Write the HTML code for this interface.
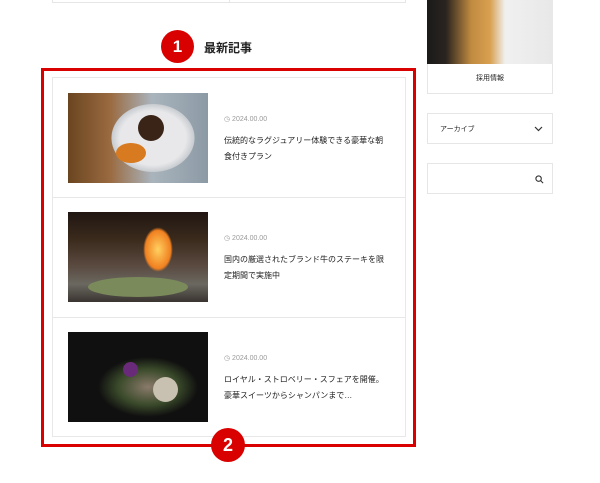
<!DOCTYPE html>
<html><head><meta charset="utf-8"><style>
body{margin:0;width:600px;height:483px;background:#fff;position:relative;overflow:hidden;font-family:"Liberation Sans","Noto Sans CJK JP",sans-serif;color:#222}
.a{position:absolute;box-sizing:border-box}
.img{position:absolute;left:15px;width:140px;height:90px}
.date{position:absolute;left:171px;font-size:7px;color:#999}
.t{position:absolute;left:171px;font-size:8px;line-height:16px;color:#222;width:180px;white-space:nowrap}
</style></head><body>
<div class="a" style="left:52px;top:-2px;width:354px;height:5px;border:1px solid #e6e6e6;border-top:none"></div>
<div class="a" style="left:229px;top:0;width:1px;height:3px;background:#e6e6e6"></div>
<div class="a" style="left:161px;top:30px;width:33px;height:33px;border-radius:50%;background:#d90000;color:#fff;font-weight:bold;font-size:17px;text-align:center;line-height:33px">1</div>
<div class="a" style="left:204px;top:39px;font-size:12px;font-weight:bold">最新記事</div>
<div class="a" style="left:41px;top:68px;width:375px;height:379px;border:3px solid #d90000"></div>
<div class="a" style="left:52px;top:77px;width:354px;height:360px;border:1px solid #e8e8e8">
 <div class="a" style="left:0;top:119px;width:352px;height:1px;background:#e8e8e8"></div>
 <div class="a" style="left:0;top:239px;width:352px;height:1px;background:#e8e8e8"></div>
 <div class="img" style="top:15px;background:radial-gradient(ellipse 55px 45px at 85px 45px,#e8e8ea 60%,#c8ccd0 75%,transparent 76%),linear-gradient(90deg,#6a4520 0,#9a6a40 30%,#a9b4bc 60%,#8c9aa6)"><div class="a" style="left:70px;top:22px;width:26px;height:26px;border-radius:50%;background:#3a2418"></div><div class="a" style="left:48px;top:50px;width:30px;height:20px;border-radius:50%;background:#d87a20"></div></div>
 <div class="date" style="top:37px">◷ 2024.00.00</div>
 <div class="t" style="top:55px">伝統的なラグジュアリー体験できる豪華な朝<br>食付きプラン</div>
 <div class="img" style="top:134px;background:linear-gradient(180deg,#201612 0,#3a2a1c 30%,#5a4a40 60%,#6a6860 80%,#3a3430);"><div class="a" style="left:75px;top:15px;width:30px;height:45px;border-radius:50% 50% 40% 40%;background:radial-gradient(#ffd060,#f08020 60%,transparent 70%)"></div><div class="a" style="left:20px;top:65px;width:100px;height:20px;border-radius:50%;background:#7a8a5a"></div></div>
 <div class="date" style="top:156px">◷ 2024.00.00</div>
 <div class="t" style="top:174px">国内の厳選されたブランド牛のステーキを限<br>定期間で実施中</div>
 <div class="img" style="top:254px;background:radial-gradient(ellipse 50px 30px at 80px 55px,#8a7a6a,#3a4a2a 60%,#101010 100%)"><div class="a" style="left:55px;top:30px;width:15px;height:15px;border-radius:50%;background:#6a2a7a"></div><div class="a" style="left:85px;top:45px;width:25px;height:25px;border-radius:50%;background:#c8c0b0"></div></div>
 <div class="date" style="top:276px">◷ 2024.00.00</div>
 <div class="t" style="top:294px">ロイヤル・ストロベリー・スフェアを開催。<br>豪華スイーツからシャンパンまで…</div>
</div>
<div class="a" style="left:211px;top:428px;width:34px;height:34px;border-radius:50%;background:#d90000;color:#fff;font-weight:bold;font-size:18px;text-align:center;line-height:34px">2</div>
<div class="a" style="left:427px;top:-1px;width:126px;height:95px;border:1px solid #e6e6e6"></div>
<div class="a" style="left:427px;top:0;width:126px;height:64px;background:linear-gradient(90deg,#1a1a1a 0,#2a2420 15%,#c08a40 35%,#d8a050 50%,#f0f0f0 62%,#e8e8e8 100%)"></div>
<div class="a" style="left:427px;top:73px;width:126px;text-align:center;font-size:7px">採用情報</div>
<div class="a" style="left:427px;top:113px;width:126px;height:31px;border:1px solid #e6e6e6;font-size:7px;padding:10px 0 0 12px">アーカイブ<svg style="position:absolute;right:9px;top:11px" width="9" height="7" viewBox="0 0 9 7"><path d="M1 2L4.5 5.5L8 2" fill="none" stroke="#333" stroke-width="1.2"/></svg></div>
<div class="a" style="left:427px;top:163px;width:126px;height:31px;border:1px solid #e6e6e6"><svg style="position:absolute;right:8px;top:11px" width="9" height="9" viewBox="0 0 10 10"><circle cx="4" cy="4" r="3" fill="none" stroke="#333" stroke-width="1.2"/><path d="M6.3 6.3L9 9" stroke="#333" stroke-width="1.2"/></svg></div>
</body></html>
